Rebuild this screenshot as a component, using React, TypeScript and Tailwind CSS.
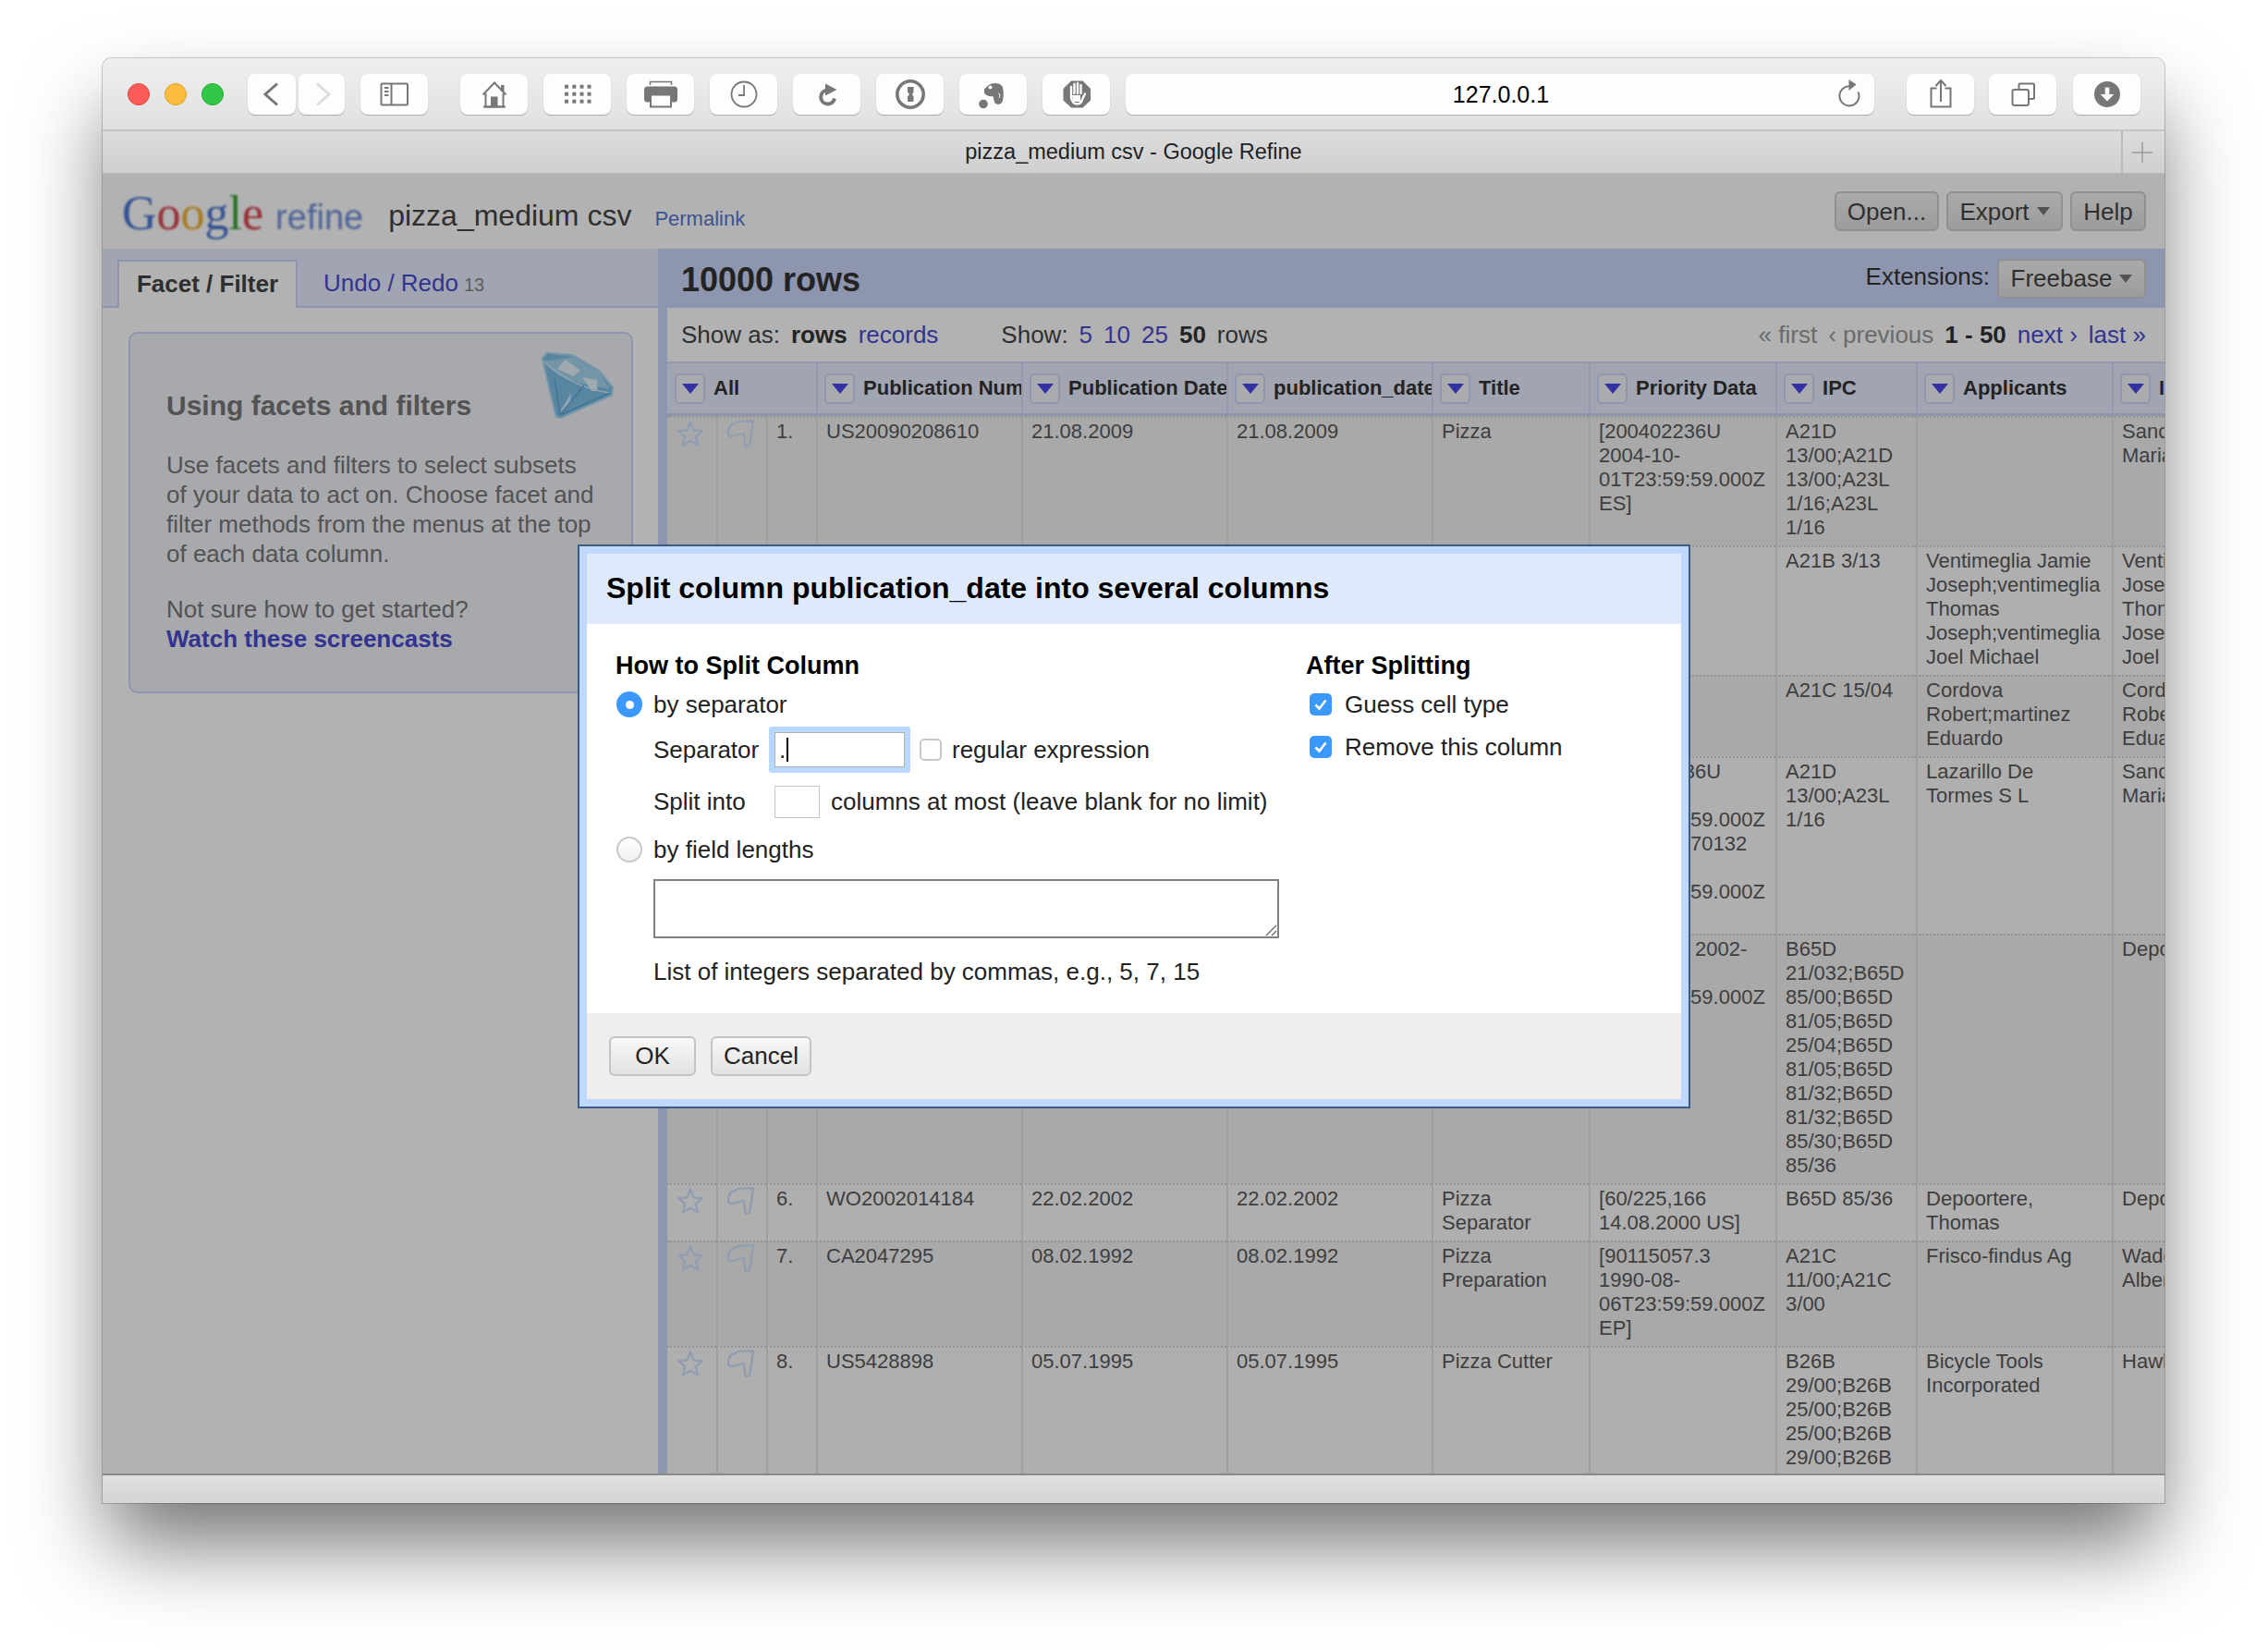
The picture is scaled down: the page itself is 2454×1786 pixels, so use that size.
import type { ReactNode } from "react";

type Row = {
  num: string;
  pub: string;
  date: string;
  title: string;
  priority: string;
  ipc: string;
  applicants: string;
  inventors: string;
};

const rows: Row[] = [
  { num: "1.", pub: "US20090208610", date: "21.08.2009", title: "Pizza", priority: "[200402236U\n2004-10-\n01T23:59:59.000Z\nES]", ipc: "A21D\n13/00;A21D\n13/00;A23L\n1/16;A23L\n1/16", applicants: "", inventors: "Sanchez\nMaria" },
  { num: "2.", pub: "US8794132", date: "05.08.2014", title: "Pizza Box", priority: "", ipc: "A21B 3/13", applicants: "Ventimeglia Jamie\nJoseph;ventimeglia\nThomas\nJoseph;ventimeglia\nJoel Michael", inventors: "Ventimeglia\nJoseph\nThomas\nJoseph\nJoel" },
  { num: "3.", pub: "US7521076", date: "21.04.2009", title: "Pizza", priority: "", ipc: "A21C 15/04", applicants: "Cordova\nRobert;martinez\nEduardo", inventors: "Cordova\nRobert\nEduardo" },
  { num: "4.", pub: "EP1665941", date: "07.06.2006", title: "Pizza", priority: "[200402236U\n2004-10-\n01T23:59:59.000Z\nES,P200070132\n2007-01-\n01T23:59:59.000Z\nES]", ipc: "A21D\n13/00;A23L\n1/16", applicants: "Lazarillo De\nTormes S L", inventors: "Sanchez\nMaria" },
  { num: "5.", pub: "WO2002014185", date: "22.02.2002", title: "Pizza Box", priority: "[2002001  2002-\n03-\n01T23:59:59.000Z\nEP]", ipc: "B65D\n21/032;B65D\n85/00;B65D\n81/05;B65D\n25/04;B65D\n81/05;B65D\n81/32;B65D\n81/32;B65D\n85/30;B65D\n85/36", applicants: "", inventors: "Depoortere" },
  { num: "6.", pub: "WO2002014184", date: "22.02.2002", title: "Pizza\nSeparator", priority: "[60/225,166\n14.08.2000 US]", ipc: "B65D 85/36", applicants: "Depoortere,\nThomas", inventors: "Depoortere" },
  { num: "7.", pub: "CA2047295", date: "08.02.1992", title: "Pizza\nPreparation", priority: "[90115057.3\n1990-08-\n06T23:59:59.000Z\nEP]", ipc: "A21C\n11/00;A21C\n3/00", applicants: "Frisco-findus Ag", inventors: "Wade\nAlbert" },
  { num: "8.", pub: "US5428898", date: "05.07.1995", title: "Pizza Cutter", priority: "", ipc: "B26B\n29/00;B26B\n25/00;B26B\n25/00;B26B\n29/00;B26B\n25/00", applicants: "Bicycle Tools\nIncorporated", inventors: "Hawkins" },
];

const columns = ["Publication Number", "Publication Date", "publication_date", "Title", "Priority Data", "IPC", "Applicants", "Inventors"];

function ToolButton({ width, className, children }: { width: string; className?: string; children: ReactNode }) {
  return (
    <div className={`${width} ${className ?? ""} h-[44px] shrink-0 rounded-[8px] bg-[#fdfdfd] shadow-[0_1px_1px_rgba(0,0,0,0.25)]`}>
      {children}
    </div>
  );
}

function Glyph({ w = 73, children }: { w?: number; children: ReactNode }) {
  return (
    <svg width={w} height={44} viewBox={`0 0 ${w} 44`} className="block">
      {children}
    </svg>
  );
}

function Toolbar() {
  const ink = "#777";
  return (
    <div className="flex h-[79px] shrink-0 items-start border-b-2 border-[#c4c4c4] bg-gradient-to-b from-[#efefef] to-[#e0e0e0] pl-[27px] pt-[17px]">
      <div className="mt-[10px] flex gap-[16px]">
        <div className="h-[24px] w-[24px] rounded-full border border-[#e0443e] bg-[#fc5b57]" />
        <div className="h-[24px] w-[24px] rounded-full border border-[#dea123] bg-[#fdbc40]" />
        <div className="h-[24px] w-[24px] rounded-full border border-[#1aab29] bg-[#33c748]" />
      </div>
      <ToolButton width="w-[52px]" className="ml-[26px]">
        <Glyph w={52}>
          <path d="M32 10.5 19 22l13 11.5" fill="none" stroke={ink} strokeWidth="3" />
        </Glyph>
      </ToolButton>
      <ToolButton width="w-[50px]" className="ml-[3px]">
        <Glyph w={50}>
          <path d="M20 10.5 33 22 20 33.5" fill="none" stroke="#ddd" strokeWidth="3" />
        </Glyph>
      </ToolButton>
      <ToolButton width="w-[73px]" className="ml-[17px]">
        <Glyph>
          <rect x="22.5" y="10.5" width="28.5" height="23" rx="1" fill="none" stroke={ink} strokeWidth="2" />
          <path d="M33.5 10.5v23" stroke={ink} strokeWidth="2" />
          <path d="M26 15h4.5M26 19h4.5M26 23h4.5" stroke={ink} strokeWidth="2" />
        </Glyph>
      </ToolButton>
      <ToolButton width="w-[73px]" className="ml-[35px]">
        <Glyph>
          <path d="M24.5 22.5 37 9.5l12.5 13" fill="none" stroke={ink} strokeWidth="2" />
          <path d="M27.5 21v14.5h19V21" fill="none" stroke={ink} strokeWidth="2" />
          <rect x="44" y="12" width="3.5" height="7" fill={ink} />
          <rect x="33" y="24.5" width="7.5" height="11" fill={ink} />
          <path d="M25 35.5h24" stroke={ink} strokeWidth="2" />
        </Glyph>
      </ToolButton>
      <ToolButton width="w-[73px]" className="ml-[17px]">
        <Glyph>
          {[13.7, 21.7, 29.7].map((y) =>
            [23, 31.3, 39.5, 47.5].map((x) => <rect key={`${x}-${y}`} x={x} y={y - 2} width="4" height="4" fill={ink} />),
          )}
        </Glyph>
      </ToolButton>
      <ToolButton width="w-[73px]" className="ml-[17px]">
        <Glyph>
          <path d="M25.5 12V8.5h23V12" fill="none" stroke={ink} strokeWidth="1.5" />
          <rect x="19" y="13.5" width="36" height="17" rx="3.5" fill={ink} />
          <rect x="26" y="22.5" width="22" height="13" fill="#fdfdfd" stroke={ink} strokeWidth="2" />
        </Glyph>
      </ToolButton>
      <ToolButton width="w-[73px]" className="ml-[17px]">
        <Glyph>
          <circle cx="37" cy="22" r="13.5" fill="none" stroke={ink} strokeWidth="1.8" />
          <path d="M37 12v11h-6" fill="none" stroke={ink} strokeWidth="1.8" />
        </Glyph>
      </ToolButton>
      <ToolButton width="w-[73px]" className="ml-[17px]">
        <Glyph>
          <path d="M37 17.5a7.5 7.5 0 1 0 8 9" fill="none" stroke={ink} strokeWidth="4" />
          <path d="M35 10.5 47.5 17 35 23.5z" fill={ink} />
        </Glyph>
      </ToolButton>
      <ToolButton width="w-[73px]" className="ml-[17px]">
        <Glyph>
          <circle cx="37" cy="22" r="14.2" fill="none" stroke={ink} strokeWidth="3.6" />
          <path d="M34 14h6.5v5.5L39 22l1.5 2.5V30H34v-5.5l2-2.5-2-2.5z" fill={ink} />
        </Glyph>
      </ToolButton>
      <ToolButton width="w-[73px]" className="ml-[17px]">
        <Glyph>
          <circle cx="26" cy="32.5" r="4.8" fill={ink} />
          <path d="M31 12.5c4-3.500 13-3.500 15.500 1 2 5 1.500 14-.5 17.500-2 2.500-6.500 2.500-8-.5l-1.500-6.500c-3 1-7-.5-9.500-3v-4.500z" fill={ink} />
          <circle cx="33.500" cy="14.500" r="2" fill="#fdfdfd" />
          <path d="M42 21c2 0 2.500 3 1 5" fill="none" stroke="#fdfdfd" strokeWidth="1" />
        </Glyph>
      </ToolButton>
      <ToolButton width="w-[73px]" className="ml-[17px]">
        <Glyph>
          <path d="M31 7.500h12.500l8.500 8.500v12.500L43.500 36.500H31L22.500 28.500V16z" fill={ink} />
          <path d="M31 22v-8M34.500 21v-10M38 21V10M41.500 21v-9M31 21v5c1 4 3 6.500 6.500 6.500 4 0 5-2.500 5.500-5l3-6" fill="none" stroke="#fdfdfd" strokeWidth="2.400" strokeLinecap="round" />
          <path d="M32 23h9v7h-8z" fill="#fdfdfd" />
        </Glyph>
      </ToolButton>
      <div className="relative ml-[17px] flex h-[44px] w-[810px] shrink-0 items-center justify-center rounded-[8px] bg-[#fdfdfd] text-[25px] text-black shadow-[0_1px_1px_rgba(0,0,0,0.25)]">
        <span className="pl-[2px] pt-[1px]">127.0.0.1</span>
        <svg width="28" height="32" viewBox="0 0 28 32" className="absolute right-[14px] top-[5px]">
          <path d="M16.500 8.500a10.500 10.500 0 1 0 8 6" fill="none" stroke="#777" strokeWidth="2" />
          <path d="M14.500 1v12l8-6.500z" fill="#777" />
        </svg>
      </div>
      <ToolButton width="w-[73px]" className="ml-[35px]">
        <Glyph>
          <path d="M32.500 15.500h-6v20h21v-20h-6" fill="none" stroke={ink} strokeWidth="2" />
          <path d="M37 30V7.500M31.500 13 37 7l5.500 6" fill="none" stroke={ink} strokeWidth="2" />
        </Glyph>
      </ToolButton>
      <ToolButton width="w-[73px]" className="ml-[16px]">
        <Glyph>
          <rect x="25.500" y="17" width="17.500" height="17" rx="2" fill="none" stroke={ink} strokeWidth="2" />
          <path d="M32.500 16.500v-5a1 1 0 0 1 1-1h14.500a1 1 0 0 1 1 1V26a1 1 0 0 1-1 1h-4.500" fill="none" stroke={ink} strokeWidth="2" />
        </Glyph>
      </ToolButton>
      <ToolButton width="w-[73px]" className="ml-[18px]">
        <Glyph>
          <circle cx="37" cy="22" r="14" fill={ink} />
          <path d="M34.700 14.500h4.600V22h5l-7.300 7.500L29.700 22h5z" fill="#fdfdfd" />
        </Glyph>
      </ToolButton>
    </div>
  );
}

function TabBar() {
  return (
    <div className="flex h-[45px] shrink-0 items-stretch bg-gradient-to-b from-[#dcdcdc] to-[#d0d0d0] pl-[47px] text-[23.500px] text-[#222]">
      <div className="flex flex-1 items-center justify-center">pizza_medium csv - Google Refine</div>
      <div className="flex w-[47px] items-center justify-center border-l-2 border-[#bcbcbc] pr-[3px] text-[#999]">
        <svg width="24" height="24" viewBox="0 0 24 24">
          <path d="M12 1v22M1 12h22" stroke="#9a9a9a" strokeWidth="1.500" />
        </svg>
      </div>
    </div>
  );
}

function Caret({ color = "#777" }: { color?: string }) {
  return (
    <svg width="14" height="9" viewBox="0 0 14 9" className="shrink-0">
      <path d="M0 0h14L7 9z" fill={color} />
    </svg>
  );
}

function HeaderButton({ label, caret, className }: { label: string; caret?: boolean; className?: string }) {
  return (
    <div className={`${className ?? ""} flex items-center justify-center gap-[8px] rounded-[6px] border-2 border-[#cfcfcf] bg-gradient-to-b from-[#f4f4f4] to-[#e0e0e0] text-[26px] leading-none text-[#444]`}>
      <span>{label}</span>
      {caret && <Caret />}
    </div>
  );
}

function Gem() {
  return (
    <svg width="110" height="90" viewBox="0 0 110 90" className="absolute left-[429px] top-[10px]">
      <path d="M16.700 16.700 21.700 10.700 50 13.300 78.300 30 93.300 48.300 91.700 56.700 36.700 81 31.700 80z" fill="#7fc0e8" stroke="#a8d8f2" strokeWidth="2" strokeLinejoin="round" />
      <path d="M18 20 50 15 78 31 90 50 60 44 35 35z" fill="#a6d6f0" />
      <path d="M33 28 42 18 58 30 50 36z" fill="#e4f2fa" />
      <path d="M60 37 76 40 76 52 70 52z" fill="#e4f2fa" />
      <path d="M35 76 48 54 47 66z" fill="#cfe8f6" />
      <path d="M18 20C38 38 62 50 90 54" fill="none" stroke="#d4ecf8" strokeWidth="1.500" />
      <path d="M36 78 30 38M36 78 90 54M36 78 62 46" fill="none" stroke="#5fa8d6" strokeWidth="1.500" />
    </svg>
  );
}

function Star() {
  return (
    <svg width="30" height="30" viewBox="0 0 30 30" className="ml-[10px] mt-[2px] block">
      <path d="M15 2.500 18.600 11.500 28 12.200 20.800 18.300 23.200 27.800 15 22.700 6.800 27.800 9.200 18.300 2 12.200 11.400 11.500z" fill="none" stroke="#cfe2fb" strokeWidth="2.400" strokeLinejoin="round" />
    </svg>
  );
}

function Flag() {
  return (
    <svg width="30" height="31" viewBox="0 0 30 31" className="ml-[10px] mt-[2px] block">
      <path d="M4 6 12 2l16-.8-4 26.300-4.500 1.800-1.500-14.500-14.500 3.500L1 16l0-5.500z" fill="none" stroke="#cfe2fb" strokeWidth="2.400" strokeLinejoin="round" />
    </svg>
  );
}

function Cell({ text }: { text: string }) {
  return (
    <td className="overflow-hidden border-l-2 border-t-2 border-l-[#e4e4e4] border-t-[#d4d4d4] pb-[6px] pl-[9px] pr-[11px] pt-[2px] align-top whitespace-pre [border-top-style:dotted]">
      {text}
    </td>
  );
}

function DataTable() {
  return (
    <table className="w-[1700px] table-fixed border-separate border-spacing-0 text-[22px] leading-[26px] text-[#5a5a5a]">
      <colgroup>
        <col className="w-[53px]" />
        <col className="w-[54px]" />
        <col className="w-[54px]" />
        <col className="w-[222px]" />
        <col className="w-[222px]" />
        <col className="w-[222px]" />
        <col className="w-[170px]" />
        <col className="w-[202px]" />
        <col className="w-[152px]" />
        <col className="w-[212px]" />
        <col className="w-[337px]" />
      </colgroup>
      <thead>
        <tr className="h-[59px] bg-[#e7ecfe] text-left font-bold text-[#333]">
          {["All", ...columns].map((label, i) => (
            <th
              key={label}
              colSpan={i === 0 ? 3 : 1}
              className={`overflow-hidden border-b-[3px] border-t-2 border-b-[#ccd5f8] border-t-[#d5dcfc] p-0 ${i === 0 ? "" : "border-l-2 border-l-[#d5dcfc]"}`}
            >
              <div className={`flex items-center gap-[9px] whitespace-nowrap ${i === 0 ? "pl-[8px]" : "pl-[7px]"}`}>
                <div className="flex h-[33px] w-[33px] shrink-0 items-center justify-center rounded-[5px] border-2 border-[#cfd7fb] bg-[#f4f5f9]">
                  <svg width="18" height="11" viewBox="0 0 18 11">
                    <path d="M0 0h18L9 11z" fill="#4848e8" />
                  </svg>
                </div>
                <span>{label}</span>
              </div>
            </th>
          ))}
        </tr>
      </thead>
      <tbody>
        {rows.map((r, i) => (
          <tr key={r.num} className={i % 2 === 0 ? "bg-[#f3f3f3]" : "bg-[#fbfbfb]"}>
            <td className="border-t-2 border-t-[#d4d4d4] p-0 align-top [border-top-style:dotted]">
              <Star />
            </td>
            <td className="border-l-2 border-t-2 border-l-[#e4e4e4] border-t-[#d4d4d4] p-0 align-top [border-top-style:dotted]">
              <Flag />
            </td>
            <Cell text={r.num} />
            <Cell text={r.pub} />
            <Cell text={r.date} />
            <Cell text={r.date} />
            <Cell text={r.title} />
            <Cell text={r.priority} />
            <Cell text={r.ipc} />
            <Cell text={r.applicants} />
            <Cell text={r.inventors} />
          </tr>
        ))}
      </tbody>
    </table>
  );
}

function LeftPanel() {
  return (
    <div className="flex w-[601px] shrink-0 flex-col">
      <div className="flex h-[64px] items-end border-b-2 border-[#ccd5f8] bg-[#e7ecfe] pl-[16px] text-[26px]">
        <div className="-mb-[2px] flex h-[52px] w-[195px] items-center justify-center border-x-2 border-t-2 border-[#ccd5f8] bg-white pb-[2px] font-bold text-[#444]">
          Facet / Filter
        </div>
        <div className="ml-[28px] flex h-[50px] items-center gap-[6px] text-[#4a4ad0]">
          <span>Undo / Redo</span>
          <span className="mt-[3px] text-[20px] text-[#888]">13</span>
        </div>
      </div>
      <div className="pl-[28px] pt-[26px]">
        <div className="relative h-[391px] w-[546px] rounded-[10px] border-2 border-[#ccd5f8] bg-[#f1f2f8] pl-[39px] pt-[62px] text-[26px] leading-[32px] text-[#777]">
          <Gem />
          <div className="text-[30px] font-bold">Using facets and filters</div>
          <p className="mt-[32px]">
            Use facets and filters to select subsets
            <br />
            of your data to act on. Choose facet and
            <br />
            filter methods from the menus at the top
            <br />
            of each data column.
          </p>
          <p className="mt-[28px]">Not sure how to get started?</p>
          <a className="font-bold text-[#4a4ad0]">Watch these screencasts</a>
        </div>
      </div>
    </div>
  );
}

function RightPanel() {
  return (
    <div className="flex min-w-0 flex-1 flex-col">
      <div className="flex h-[64px] shrink-0 items-center justify-between bg-[#ccd6fb] pl-[25px] pr-[20px]">
        <div className="pt-[3px] text-[36px] font-bold text-[#333]">10000 rows</div>
        <div className="flex items-center gap-[8px] text-[26px] text-[#333]">
          <span className="pb-[3px]">Extensions:</span>
          <HeaderButton label="Freebase" caret className="h-[43px] w-[161px]" />
        </div>
      </div>
      <div className="flex min-h-0 flex-1 flex-col border-l-[10px] border-[#ccd6fb]">
        <div className="flex h-[58px] shrink-0 items-center justify-between pl-[15px] pr-[20px] text-[26px] text-[#444]">
          <div className="flex items-center gap-[12px]">
            <span>Show as:</span>
            <span className="font-bold text-[#333]">rows</span>
            <span className="text-[#4a4ad0]">records</span>
            <span className="ml-[56px]">Show:</span>
            <span className="text-[#4a4ad0]">5</span>
            <span className="text-[#4a4ad0]">10</span>
            <span className="text-[#4a4ad0]">25</span>
            <span className="font-bold text-[#333]">50</span>
            <span>rows</span>
          </div>
          <div className="flex items-center gap-[12px]">
            <span className="text-[#999]">« first</span>
            <span className="text-[#999]">‹ previous</span>
            <span className="font-bold text-[#333]">1 - 50</span>
            <span className="text-[#4a4ad0]">next ›</span>
            <span className="text-[#4a4ad0]">last »</span>
          </div>
        </div>
        <div className="min-h-0 flex-1 overflow-hidden">
          <DataTable />
        </div>
      </div>
    </div>
  );
}

function Radio({ checked }: { checked?: boolean }) {
  return checked ? (
    <div className="flex h-[28px] w-[28px] shrink-0 items-center justify-center rounded-full bg-[#3b99fc]">
      <div className="h-[9px] w-[9px] rounded-full bg-white" />
    </div>
  ) : (
    <div className="h-[28px] w-[28px] shrink-0 rounded-full border-2 border-[#c8c8c8] bg-gradient-to-b from-white to-[#f0f0f0]" />
  );
}

function CheckBox() {
  return (
    <div className="flex h-[24px] w-[24px] shrink-0 items-center justify-center rounded-[5px] bg-[#3b99fc]">
      <svg width="18" height="18" viewBox="0 0 18 18">
        <path d="M3.500 9.500 7.500 13.500 14.500 4.500" fill="none" stroke="#fff" strokeWidth="2.500" />
      </svg>
    </div>
  );
}

function FootButton({ label, width }: { label: string; width: string }) {
  return (
    <div className={`${width} flex h-[43px] items-center justify-center rounded-[6px] border-2 border-[#c4c4c4] bg-gradient-to-b from-[#f8f8f8] to-[#e2e2e2] text-[26px] text-[#222]`}>
      {label}
    </div>
  );
}

function SplitDialog() {
  return (
    <div className="absolute left-[514px] top-[401px] flex h-[610px] w-[1204px] flex-col border-2 border-[#3a5c85] bg-[#bfd8fc] p-[8px] text-[26px] text-[#222]">
      <div className="flex h-[76px] shrink-0 items-center bg-[#deeafc] pb-[3px] pl-[21px] text-[32px] font-bold text-black">
        Split column publication_date into several columns
      </div>
      <div className="flex h-[421px] shrink-0 bg-white pl-[31px] pt-[30px]">
        <div className="w-[747px] shrink-0">
          <div className="h-[30px] text-[27px] font-bold leading-[30px] text-black">How to Split Column</div>
          <div className="ml-[1px] mt-[13px] flex h-[28px] items-center gap-[12px]">
            <Radio checked />
            <span>by separator</span>
          </div>
          <div className="mt-[10px] flex h-[50px] items-center pl-[41px]">
            <span className="w-[125px]">Separator</span>
            <div className="h-[50px] w-[153px] rounded-[3px] bg-[#b8d8fd] p-[6px]">
              <div className="flex h-full items-center border border-[#b0b0b0] bg-white pl-[4px]">
                <span>.</span>
                <span className="ml-[1px] h-[26px] w-[2px] bg-black" />
              </div>
            </div>
            <div className="ml-[10px] h-[24px] w-[24px] rounded-[5px] border-2 border-[#c8c8c8] bg-white" />
            <span className="ml-[11px]">regular expression</span>
          </div>
          <div className="mt-[14px] flex h-[35px] items-center pl-[41px]">
            <span className="w-[131px]">Split into</span>
            <input className="h-[35px] w-[49px] border border-[#c4c4c4] bg-white outline-none" />
            <span className="ml-[12px]">columns at most (leave blank for no limit)</span>
          </div>
          <div className="ml-[1px] mt-[20px] flex h-[28px] items-center gap-[12px]">
            <Radio />
            <span>by field lengths</span>
          </div>
          <div className="relative ml-[41px] mt-[18px] h-[64px] w-[677px]">
            <textarea className="block h-[64px] w-[677px] resize-none border-2 border-[#808080] bg-white outline-none" />
            <svg width="14" height="14" viewBox="0 0 14 14" className="absolute bottom-[2px] right-[2px]">
              <path d="M2 13 13 2M8 13l5-5" stroke="#666" strokeWidth="1.300" />
            </svg>
          </div>
          <div className="ml-[41px] mt-[21px] h-[30px] leading-[30px]">List of integers separated by commas, e.g., 5, 7, 15</div>
        </div>
        <div>
          <div className="h-[30px] text-[27px] font-bold leading-[30px] text-black">After Splitting</div>
          <div className="ml-[4px] mt-[13px] flex h-[28px] items-center gap-[14px]">
            <CheckBox />
            <span>Guess cell type</span>
          </div>
          <div className="ml-[4px] mt-[18px] flex h-[28px] items-center gap-[14px]">
            <CheckBox />
            <span>Remove this column</span>
          </div>
        </div>
      </div>
      <div className="flex flex-1 items-start gap-[16px] bg-[#eeeeee] pl-[24px] pt-[25px]">
        <FootButton label="OK" width="w-[94px]" />
        <FootButton label="Cancel" width="w-[109px]" />
      </div>
    </div>
  );
}

export default function App() {
  return (
    <div className="h-[1786px] w-[2454px] overflow-hidden bg-white pl-[111px] pt-[63px] font-['Liberation_Sans',Arial,sans-serif]">
      <div className="flex h-[1563px] w-[2231px] flex-col overflow-hidden rounded-t-[10px] bg-white shadow-[0_0_0_1px_rgba(0,0,0,0.2),0_50px_90px_-6px_rgba(0,0,0,0.55)]">
        <Toolbar />
        <TabBar />
        <div className="relative flex min-h-0 flex-1 flex-col overflow-hidden border-t border-[#bbb] bg-white">
          <div className="flex h-[81px] shrink-0 items-center justify-between pl-[21px] pr-[20px]">
            <div className="flex items-center">
              <div className="mt-[5px] flex items-baseline blur-[1px]">
                <span className="font-['Liberation_Serif',serif] text-[52px] leading-none">
                  <span className="text-[#4a76d0]">G</span>
                  <span className="text-[#d8434a]">o</span>
                  <span className="text-[#f0b030]">o</span>
                  <span className="text-[#4a76d0]">g</span>
                  <span className="text-[#30a030]">l</span>
                  <span className="text-[#d8434a]">e</span>
                </span>
                <span className="ml-[13px] text-[38px] leading-none text-[#6f8ed8]">refine</span>
              </div>
              <span className="ml-[27px] mt-[8px] text-[32px] text-[#444]">pizza_medium csv</span>
              <span className="ml-[25px] mt-[16px] text-[22px] text-[#5a78d0]">Permalink</span>
            </div>
            <div className="flex items-center gap-[8px]">
              <HeaderButton label="Open..." className="h-[43px] w-[113px]" />
              <HeaderButton label="Export" caret className="h-[43px] w-[126px]" />
              <HeaderButton label="Help" className="h-[43px] w-[82px]" />
            </div>
          </div>
          <div className="flex min-h-0 flex-1">
            <LeftPanel />
            <RightPanel />
          </div>
          <div className="absolute inset-0 bg-black/30" />
          <SplitDialog />
        </div>
        <div className="h-[32px] shrink-0 border-t-2 border-[#8a8a8a] bg-gradient-to-b from-[#e0e0e0] to-[#d4d4d4]" />
      </div>
    </div>
  );
}
